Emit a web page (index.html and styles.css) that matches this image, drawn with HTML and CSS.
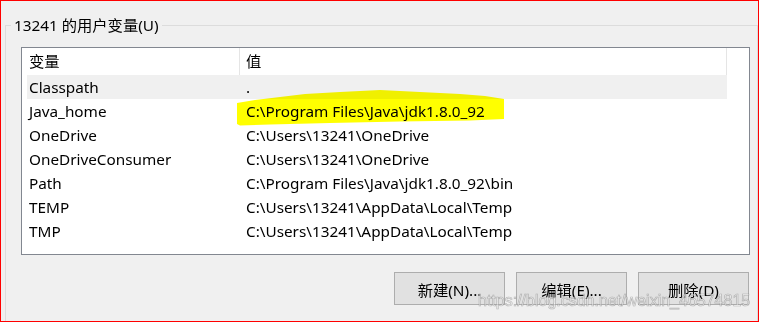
FILE: index.html
```html
<!DOCTYPE html>
<html lang="zh-CN">
<head>
<meta charset="utf-8">
<title>用户变量</title>
<link rel="stylesheet" href="styles.css">
</head>
<body>
<div class="frame">
  <div class="group">
    <div class="legend">13241 的用户变量(U)</div>
    <div class="listview">
      <div class="header">
        <div class="hcol hcol-name">变量</div>
        <div class="hcol hcol-value">值</div>
      </div>
      <div class="rows">
        <div class="row row-selected"><div class="cell-name">Classpath</div><div class="cell-value">.</div></div>
        <div class="row"><div class="cell-name">Java_home</div><div class="cell-value">C:\Program Files\Java\jdk1.8.0_92</div></div>
        <div class="row"><div class="cell-name">OneDrive</div><div class="cell-value">C:\Users\13241\OneDrive</div></div>
        <div class="row"><div class="cell-name">OneDriveConsumer</div><div class="cell-value">C:\Users\13241\OneDrive</div></div>
        <div class="row"><div class="cell-name">Path</div><div class="cell-value">C:\Program Files\Java\jdk1.8.0_92\bin</div></div>
        <div class="row"><div class="cell-name">TEMP</div><div class="cell-value">C:\Users\13241\AppData\Local\Temp</div></div>
        <div class="row"><div class="cell-name">TMP</div><div class="cell-value">C:\Users\13241\AppData\Local\Temp</div></div>
      </div>
    </div>
    <div class="buttons">
      <button class="btn">新建(N)...</button>
      <button class="btn">编辑(E)...</button>
      <button class="btn">删除(D)</button>
    </div>
  </div>
  <svg class="highlight" width="759" height="322" viewBox="0 0 759 322" aria-hidden="true">
    <path d="M237,103 L255,100 L280,97 L305,94 L340,92 L380,90 L420,92 L460,94 L485,96 L504,99 L504,119 L470,120.5 L400,121.5 L330,123 L270,124.5 L240,125.5 L237,124 Z" fill="#ffff00"/>
  </svg>
  <div class="watermark">https://blog.csdn.net/weixin_46574815</div>
</div>
</body>
</html>
```
FILE: styles.css
```css
html, body {
  margin: 0;
  padding: 0;
  background: #f0f0f0;
}

.frame {
  position: relative;
  width: 759px;
  height: 322px;
  box-sizing: border-box;
  border: 1px solid #ff0000;
  background: #f0f0f0;
  font-family: "Noto Sans", "Noto Sans CJK SC", sans-serif;
  font-size: 15.3px;
  color: #000;
  overflow: hidden;
}

.group {
  margin: 24px 0 0 4px;
  border: 1px solid #dcdcdc;
  border-bottom: none;
  padding: 0 7px 0 15px;
  height: 320px;
  box-sizing: border-box;
}

.legend {
  width: fit-content;
  margin: -11px 0 0 -10px;
  padding: 0 3px;
  background: #f0f0f0;
  line-height: 20px;
  height: 20px;
  white-space: nowrap;
}

.listview {
  margin-top: 12px;
  height: 208px;
  box-sizing: border-box;
  border: 1px solid #828790;
  background: #ffffff;
}

.header {
  display: flex;
  height: 27px;
}

.hcol {
  box-sizing: border-box;
  height: 27px;
  line-height: 27px;
  border-right: 1px solid #e5e5e5;
}

.hcol-name {
  width: 218px;
  padding-left: 7px;
}

.hcol-value {
  width: 487px;
  padding-left: 6px;
}

.rows {
  padding-left: 5px;
}

.row {
  display: flex;
  width: 700px;
  height: 24px;
  line-height: 24px;
  white-space: nowrap;
}

.row-selected {
  background: #f0f0f0;
}

.cell-name {
  width: 217px;
  box-sizing: border-box;
  padding-left: 2px;
}

.cell-value {
  padding-left: 2px;
}

.buttons {
  display: flex;
  justify-content: flex-end;
  gap: 11px;
  margin-top: 17px;
  padding-right: 1px;
}

.btn {
  width: 111px;
  height: 33px;
  box-sizing: border-box;
  border: 1px solid #adadad;
  background: #e1e1e1;
  font-family: "Noto Sans", "Noto Sans CJK SC", sans-serif;
  font-size: 15.3px;
  color: #000;
  padding: 0;
  border-radius: 0;
}

.highlight {
  position: absolute;
  left: -1px;
  top: -1px;
  mix-blend-mode: multiply;
  pointer-events: none;
}

.watermark {
  position: absolute;
  left: 477px;
  top: 292px;
  font-family: "Liberation Sans", Arial, sans-serif;
  font-size: 16px;
  line-height: 16px;
  color: rgba(255, 255, 255, 0.6);
  -webkit-text-stroke: 0.7px rgba(130, 130, 130, 0.55);
  white-space: nowrap;
  pointer-events: none;
}
```
